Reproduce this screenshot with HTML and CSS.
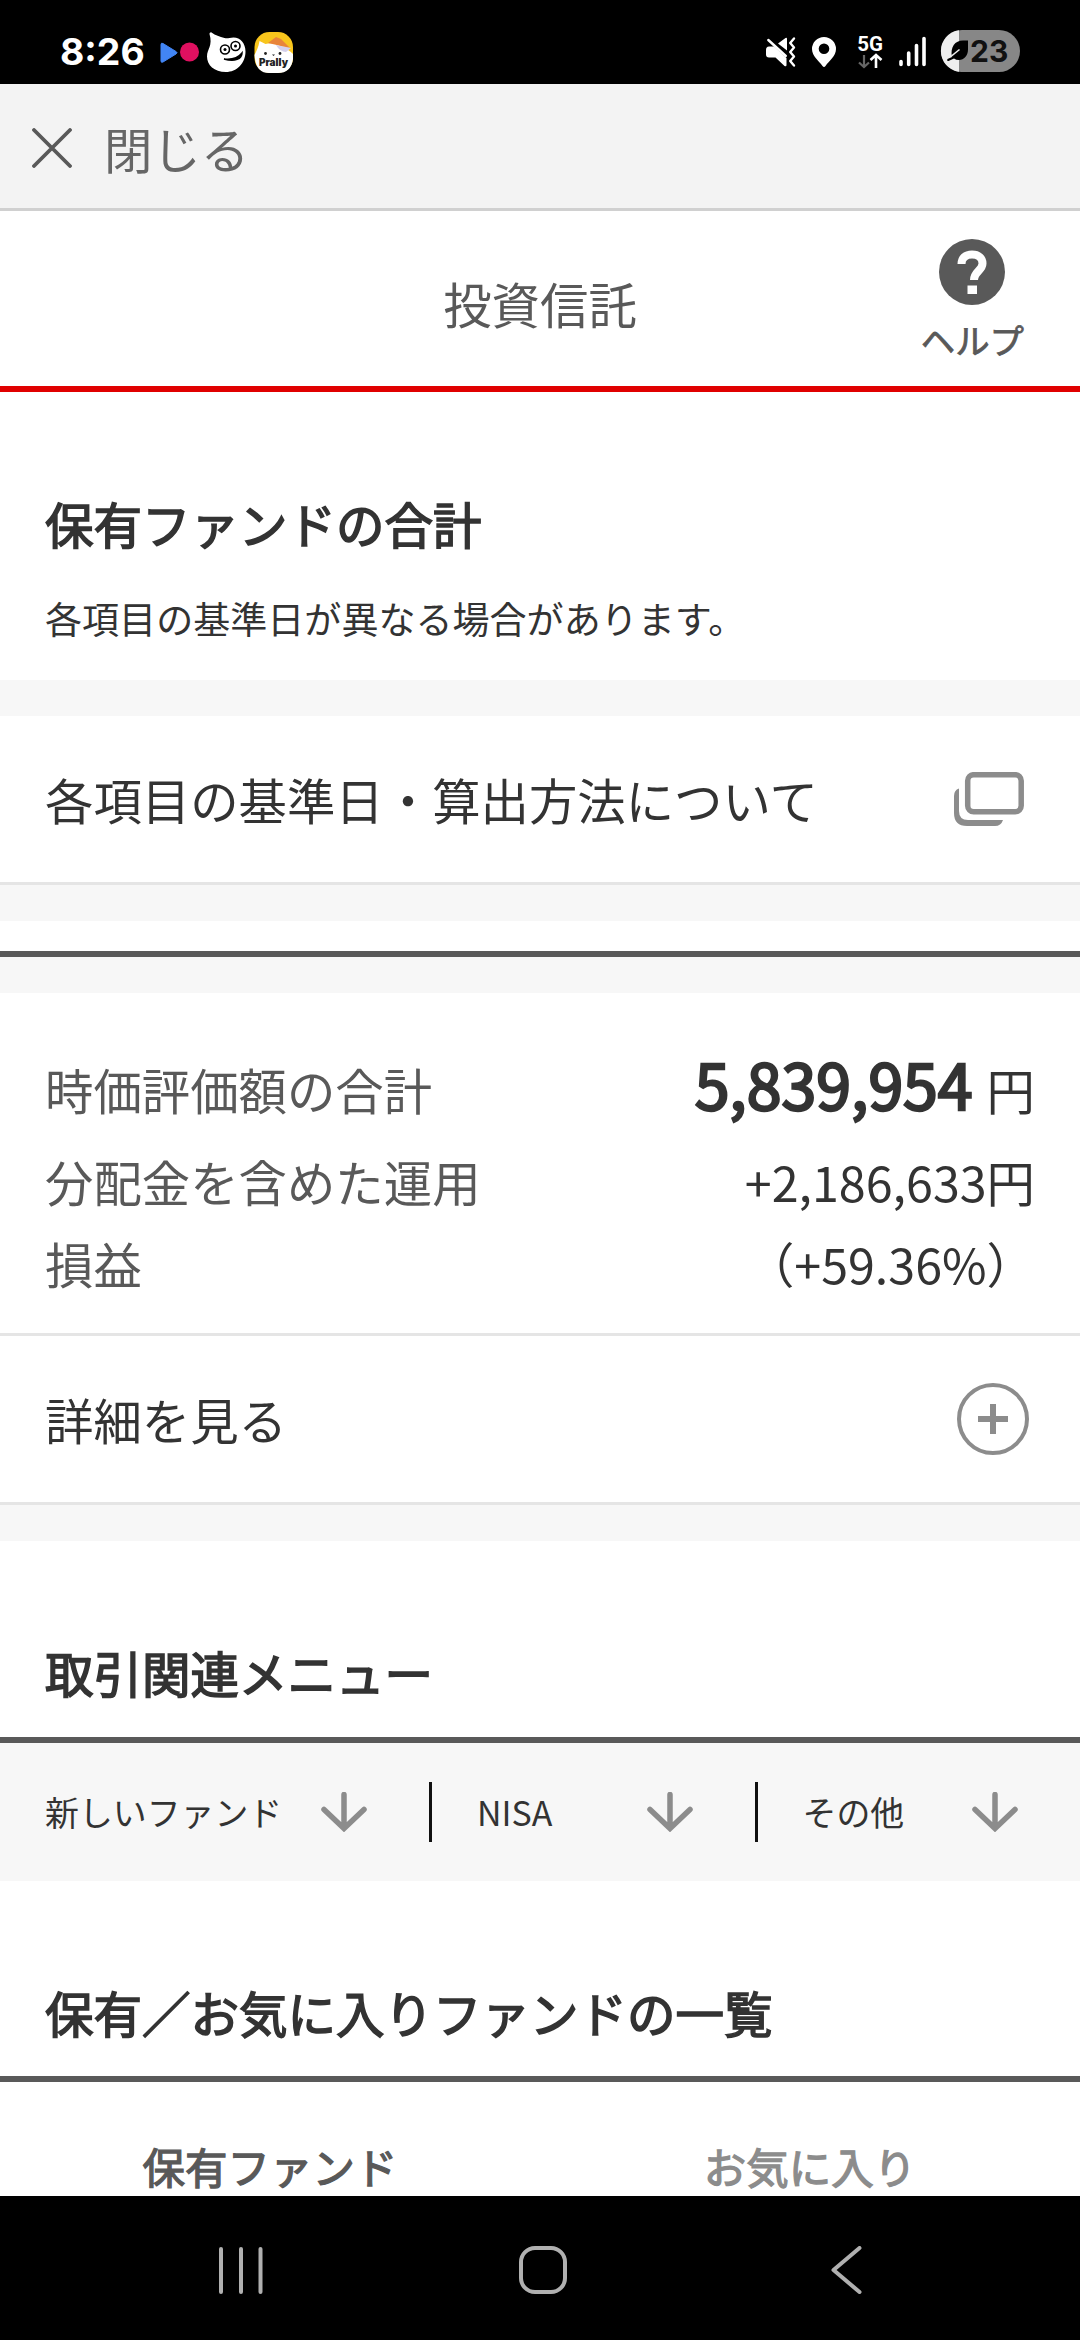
FILE: index.html
```html
<!DOCTYPE html>
<html lang="ja">
<head>
<meta charset="utf-8">
<title>投資信託</title>
<link rel="stylesheet" href="styles.css">
</head>
<body>
<div class="screen">
  <div class="status">
    <span class="clock">8:26</span>
    <svg class="notif" width="136" height="44" viewBox="158 32 136 44">
      <path d="M161 45.500q0-2 2-1l13 8q2 1 0 2.500l-13 8q-2 1-2-1z" fill="#4285f4" stroke="#4285f4"/>
      <circle cx="189.500" cy="53" r="9.500" fill="#e01060"/>
      <path d="M209.500 35c0-1 1-2 2-1.500c4 3 8 4 13 5.500c3 1 5-.5 9-.5c7 0 12 6 12 14c0 12-9 20.500-19.500 20.500C214 73 207 66 207 57.500C207 50 213 47 209.500 35z" fill="#fff"/>
      <g fill="none" stroke="#000" stroke-width="1.600"><circle cx="225" cy="50.500" r="4.500"/><circle cx="235.500" cy="47" r="4.500"/></g>
      <circle cx="225" cy="50.500" r="1.500"/><circle cx="235.500" cy="47" r="1.500"/>
      <path d="M224 60c8 1 14-1 18-6c0 6-7 9-18 6z" stroke="#000" stroke-width="1.500"/>
      <rect x="254.500" y="33" width="38.500" height="41" rx="15" fill="#f8c51c"/>
      <path d="M254.500 56c2-4 4-8 5-14l6 3q8-2 15 2q9 4 12.500 8v5q-2 14-15 14h-9q-12 0-14-14z" fill="#fff"/>
      <path d="M268 44l8-6l5 2l9 9z" fill="#e8843a"/><path d="M276 46l15 3l-5 4q-6 0-10-7z" fill="#d4d0ec"/>
      <g fill="#222"><circle cx="265.500" cy="54.500" r="1.400"/><circle cx="280" cy="54.500" r="1.400"/><path d="M272 55.500h3l-1.500 1.500z"/></g>
      <text x="273.500" y="67" class="badge-text">Prally</text>
    </svg>
    <svg class="sys" width="260" height="48" viewBox="764 28 260 48">
      <path d="M766 50q0-3.500 3-3.500h5l12.500 11.500v7q0 2-2 1l-9-8.500h-6.500q-3 0-3-3zM778 43.500l7.500-5.500q1.500-1 1.500 1v11.500z" fill="#fff"/>
      <path d="M768.300 40l17.500 16" stroke="#fff" stroke-width="2.400" stroke-linecap="round"/>
      <path d="M794 38.500l-3.800 4.500l3.800 4.500l-3.800 4.500l3.800 4.500l-3.800 4.500l3.800 4.500" fill="none" stroke="#fff" stroke-width="2.400" stroke-linecap="round" stroke-linejoin="round"/>
      <path fill="#fff" fill-rule="evenodd" d="M824 37a12 12 0 0 1 12 12c0 7-7 12-10.500 17q-1.500 1.800-3 0C819 61 812 56 812 49a12 12 0 0 1 12-12zM824 43.500a5.300 5.300 0 1 0 0 10.600a5.300 5.300 0 1 0 0-10.600z"/>
      <text x="870" y="50.500" class="net">5G</text>
      <path d="M864 55v12M859 62.500l5 4.500l5-4.500" fill="none" stroke="#666" stroke-width="2.200"/>
      <path d="M876 68V55M870.500 60l5.500-5l5.500 5" fill="none" stroke="#fff" stroke-width="2.600"/>
      <path d="M901 61.500v3M908.700 53v11.500M916.500 45.500v19M924 38.500v26" stroke="#fff" stroke-width="3.600" stroke-linecap="round"/>
      <rect x="941" y="30" width="79" height="42" rx="21" fill="#878787"/>
      <path d="M959 30.200a21 21 0 0 0 0 41.600z" fill="#eee"/>
      <path d="M968 40.500v9c0 6-4 10.500-9 10.500q-3 0-5-1.500l-5.500 2.500q-2 0-1-2l4.500-2c-2-10 3-16.500 11-16.500z"/>
      <path d="M951.500 56l8-6.500" stroke="#eee" stroke-width="1.600"/>
      <text x="970" y="62" class="batt">23</text>
    </svg>
  </div>

  <div class="closebar">
    <svg width="40" height="40" viewBox="0 0 40 40"><path d="M2 2l36 36M38 2L2 38" stroke="#595959" stroke-width="3.800" stroke-linecap="round"/></svg>
    <span>閉じる</span>
  </div>

  <header class="header">
    <h1>投資信託</h1>
    <div class="help">
      <svg width="66" height="66" viewBox="0 0 66 66"><circle cx="33" cy="33" r="33" fill="#595959"/><path d="M22.500 25c0-6 4-9.500 10.500-9.500s10.500 3.500 10.500 9c0 7-8.500 8-8.500 16.500" fill="none" stroke="#fff" stroke-width="8"/><rect x="28.500" y="46.500" width="9.500" height="8.500" fill="#fff"/></svg>
      <span>ヘルプ</span>
    </div>
  </header>

  <section class="intro">
    <h2 class="title">保有ファンドの合計</h2>
    <p>各項目の基準日が異なる場合があります。</p>
  </section>
  <div class="band"></div>
  <div class="row link">
    <span>各項目の基準日・算出方法について</span>
    <svg width="70" height="54" viewBox="0 0 70 54" fill="none"><rect x="13.700" y="2.700" width="53.500" height="37" rx="6" stroke="#8c8c8c" stroke-width="5.500"/><path d="M0 24Q0 18 5 16.500V39q0 9 9 9H49q-2 6-8 6H13Q0 54 0 41z" fill="#8c8c8c"/></svg>
  </div>
  <div class="band"></div>
  <div class="gap"></div>
  <div class="band"></div>

  <dl class="totals">
    <dt>時価評価額の合計</dt>
    <dd><strong>5,839,954</strong><span class="yen">円</span></dd>
    <dt>分配金を含めた運用<br>損益</dt>
    <dd>+2,186,633円<br>（+59.36%）</dd>
  </dl>
  <div class="row more">
    <span>詳細を見る</span>
    <svg width="72" height="72" viewBox="0 0 72 72" fill="none" stroke="#8c8c8c"><circle cx="36" cy="36" r="34" stroke-width="4"/><path d="M21 36h30M36 21v30" stroke-width="6"/></svg>
  </div>
  <div class="band"></div>

  <section class="menu"><h2 class="title">取引関連メニュー</h2></section>
  <nav class="anchors">
    <a><span>新しいファンド</span><svg width="46" height="40" viewBox="0 0 46 40"><path d="M23 2.500v33M3 17.500l20 19l20-19" fill="none" stroke="#8c8c8c" stroke-width="5.500" stroke-linecap="round"/></svg></a>
    <a><span>NISA</span><svg width="46" height="40" viewBox="0 0 46 40"><path d="M23 2.500v33M3 17.500l20 19l20-19" fill="none" stroke="#8c8c8c" stroke-width="5.500" stroke-linecap="round"/></svg></a>
    <a><span>その他</span><svg width="46" height="40" viewBox="0 0 46 40"><path d="M23 2.500v33M3 17.500l20 19l20-19" fill="none" stroke="#8c8c8c" stroke-width="5.500" stroke-linecap="round"/></svg></a>
  </nav>
  <section class="list"><h2 class="title">保有／お気に入りファンドの一覧</h2></section>
  <div class="tabs"><span class="on">保有ファンド</span><span>お気に入り</span></div>

  <div class="navbar">
    <svg class="recents" width="46" height="48" viewBox="0 0 46 48"><path d="M3 3v43M23 3v43M42.500 3v43" stroke="#b0b0b0" stroke-width="4" stroke-linecap="round"/></svg>
    <svg class="home" width="48" height="48" viewBox="0 0 48 48"><rect x="2" y="2" width="44" height="44" rx="14" fill="none" stroke="#b0b0b0" stroke-width="4"/></svg>
    <svg width="31" height="48" viewBox="0 0 31 48"><path d="M28.500 2L2.500 24L28.500 46" fill="none" stroke="#b0b0b0" stroke-width="4" stroke-linecap="round" stroke-linejoin="round"/></svg>
  </div>
</div>
</body>
</html>
```
FILE: styles.css
```css
* { box-sizing: border-box; margin: 0; padding: 0; }
body {
  width: 1080px;
  background: #fff;
  color: #333;
  font: 400 48.4px/82px "Noto Sans CJK JP", sans-serif;
}
.screen { display: flex; flex-direction: column; height: 2340px; overflow: hidden; }
.screen > * { flex: none; }
svg { display: block; flex: none; }

.status { height: 84px; padding: 28px 56px 8px 60px; background: #000; display: flex; align-items: center; }
.clock { width: 98px; color: #fff; font: 700 37.4px/46px Inter, sans-serif; white-space: nowrap; padding-bottom: 1px; }
.notif { margin-top: 2px; }
.sys { margin-left: auto; }
.badge-text { font: 900 10px Inter, sans-serif; text-anchor: middle; fill: #222; }
.net { font: 700 20.5px Roboto, sans-serif; text-anchor: middle; fill: #fff; }
.batt { font: 700 30px Inter, sans-serif; fill: #111; }

.closebar {
  height: 127px; padding: 3px 32px 0; display: flex; align-items: center; gap: 32px;
  background: #f3f3f3; border-bottom: 3px solid #d0d0d0; color: #666;
}

.header {
  height: 181px; border-bottom: 6px solid #e00000; color: #595959;
  display: grid; grid-template-columns: 1fr 200px 1fr; align-items: start;
}
.header h1 { grid-column: 2; justify-self: center; margin-top: 51px; font-weight: 400; font-size: 48.4px; white-space: nowrap; }
.help {
  justify-self: end; margin: 28px 56px 0 0; display: flex; flex-direction: column; align-items: center;
  gap: 7px; font-size: 34.4px; line-height: 54px; -webkit-text-stroke: .8px;
}

.title { font-size: 48.5px; font-weight: 400; line-height: 73px; -webkit-text-stroke: 1.6px; }
.intro { height: 288px; padding: 95px 45px 0; }
.intro p { font-size: 37.05px; line-height: 54px; margin-top: 31px; }
.band { height: 36px; background: #f7f7f7; }
.row { display: flex; align-items: center; justify-content: space-between; height: 169px; padding: 0 51px 0 45px; border-bottom: 3px solid #e5e5e5; }
.link { padding-right: 56px; }
.gap { height: 36px; border-bottom: 6px solid #595959; }

.totals {
  height: 343px; padding: 55px 45px 0; display: grid; grid-template-columns: auto auto;
  align-content: start; row-gap: 10px; border-bottom: 3px solid #e5e5e5;
}
.totals dt { color: #595959; }
.totals dd { text-align: right; }
.totals strong { font-size: 62.6px; line-height: 0; font-weight: 400; -webkit-text-stroke: 2.5px; }
.yen { margin-left: 14px; }

.menu { height: 202px; padding: 95px 45px 0; border-bottom: 6px solid #595959; }
.anchors { height: 138px; background: #f7f7f7; display: flex; align-items: center; }
.anchors a {
  flex: 1; height: 60px; padding: 0 62px 0 45px; display: flex; align-items: center;
  justify-content: space-between; font-size: 33.9px; white-space: nowrap;
}
.anchors a:first-child { flex: 0 0 429px; }
.anchors a + a { border-left: 3px solid #111; }
.list { height: 201px; padding: 95px 45px 0; border-bottom: 6px solid #595959; }
.tabs {
  height: 114px; padding-top: 52px; display: grid; grid-template-columns: 1fr 1fr; text-align: center;
  font-size: 42.5px; line-height: 64px; color: #8c8c8c; -webkit-text-stroke: 1.3px;
}
.tabs .on { color: #595959; }

.navbar { height: 144px; padding: 3px 0 0 218px; background: #000; display: flex; align-items: center; }
.recents { margin-right: 255px; }
.home { margin-right: 264px; }
```
